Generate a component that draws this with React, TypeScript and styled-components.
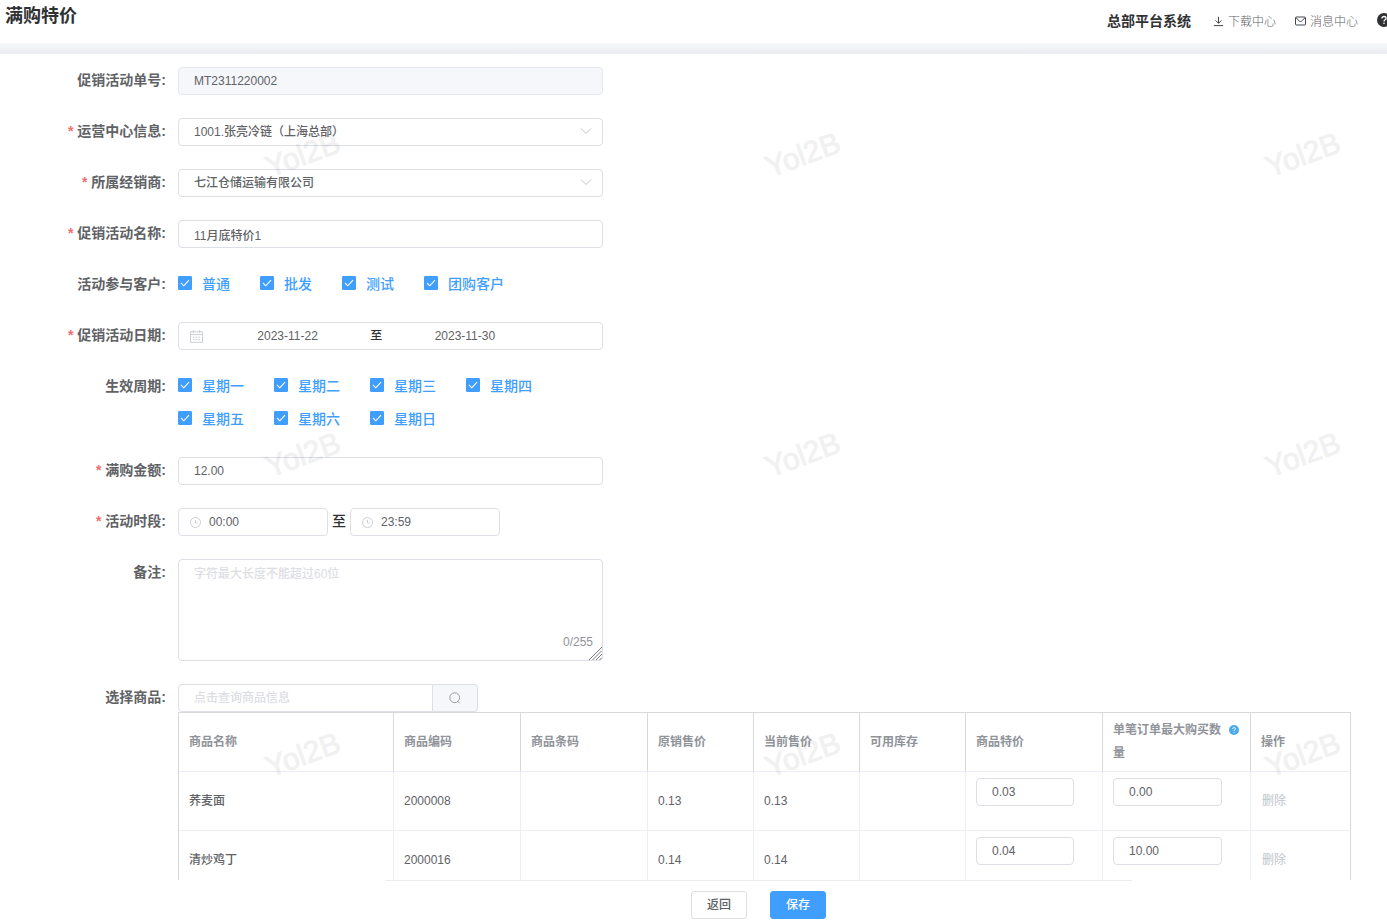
import React from "react";
import styled, { createGlobalStyle } from "styled-components";

const GlobalStyle = createGlobalStyle`
  *, *::before, *::after { box-sizing: border-box; }
  body {
    margin: 0;
    background: #fff;
    color: #606266;
    font: 500 12px/1.5 "Liberation Sans", "Noto Sans CJK SC", sans-serif;
  }
  input, select, textarea, button { font: inherit; color: inherit; margin: 0; }
`;

const Page = styled.div`
  position: relative;
  display: flex;
  flex-direction: column;
  height: 100vh;
  overflow: hidden;
`;

const Header = styled.header`
  display: flex;
  flex: none;
  align-items: flex-start;
  justify-content: space-between;
  height: 43px;
  padding-left: 5px;
`;

const Title = styled.h1`
  margin: 0;
  font-size: 18px;
  line-height: 32px;
  font-weight: 700;
  color: #303133;
`;

const HeaderNav = styled.nav`
  display: flex;
  align-items: center;
  height: 42px;
  margin-right: -4px;
`;

const SystemName = styled.strong`
  margin-right: 22px;
  font-size: 14px;
  font-weight: 700;
  color: #303133;
`;

const NavLink = styled.a`
  display: flex;
  align-items: center;
  gap: 4px;
  margin-right: 19px;
  padding-top: 1px;
  font-weight: 300;
  color: #606266;
  text-decoration: none;
`;

const HelpButton = styled.button`
  display: flex;
  padding: 0 0 2px;
  border: 0;
  background: none;
`;

const Divider = styled.div`
  flex: none;
  height: 11px;
  background: linear-gradient(#f7f8fa, #ebecef);
`;

const Content = styled.main`
  flex: 1;
  min-height: 0;
  overflow-y: auto;
  scrollbar-width: none;
  padding: 13px 36px 13px 0;
`;

const FormRow = styled.div`
  display: flex;
  align-items: flex-start;
  margin-bottom: 23px;
`;

const labelText = `
  flex: none;
  width: 178px;
  padding-right: 12px;
  font-size: 14px;
  line-height: 27px;
  font-weight: 700;
  text-align: right;
`;

const RowLabel = styled.label`
  ${labelText}
`;

const GroupLabel = styled.span`
  ${labelText}
`;

const Star = styled.span`
  margin-right: 4px;
  color: #f56c6c;
`;

const Field = styled.div`
  position: relative;
  flex: 0 1 425px;
  min-width: 0;
`;

const TextInput = styled.input<{ $icon?: boolean }>`
  display: block;
  width: 100%;
  height: 28px;
  padding: 0 15px 0 ${(p) => (p.$icon ? 30 : 15)}px;
  border: 1px solid #dcdfe6;
  border-radius: 4px;
  background: #fff;
  line-height: 26px;
  outline: 0;
  &:disabled {
    background: #f5f7fa;
    border-color: #e4e7ed;
  }
  &::placeholder { color: #dcdee3; opacity: 1; }
`;

const SelectBox = styled.select`
  display: block;
  width: 100%;
  height: 28px;
  padding: 0 30px 0 15px;
  border: 1px solid #dcdfe6;
  border-radius: 4px;
  background: #fff;
  appearance: none;
  outline: 0;
`;

const SelectArrow = styled.svg`
  position: absolute;
  top: 9px;
  right: 11px;
  pointer-events: none;
`;

const CheckList = styled.div`
  display: flex;
  flex-wrap: wrap;
  gap: 5px 30px;
`;

const CheckLabel = styled.label`
  display: flex;
  align-items: center;
  gap: 10px;
  height: 28px;
  padding-bottom: 2px;
  font-size: 14px;
  color: #409eff;
`;

const CheckMark = styled.span`
  position: relative;
  display: flex;
  width: 14px;
  height: 14px;
  margin-bottom: 2px;
  svg { position: absolute; inset: 0; pointer-events: none; }
`;

const CheckInput = styled.input`
  width: 14px;
  height: 14px;
  appearance: none;
  border: 1px solid #dcdfe6;
  border-radius: 1px;
  &:checked { background: #409eff; border-color: #409eff; }
`;

const DateRange = styled.div`
  display: flex;
  align-items: center;
  height: 28px;
  padding: 0 10px;
  border: 1px solid #dcdfe6;
  border-radius: 4px;
`;

const DateIcon = styled.span`
  display: flex;
  width: 20px;
  padding-left: 1px;
`;

const DateInput = styled.input`
  flex: 0 0 39%;
  min-width: 0;
  padding: 0;
  border: 0;
  outline: 0;
  text-align: center;
`;

const DateSeparator = styled.span`
  flex: 0 0 5%;
  text-align: center;
  color: #303133;
`;

const TimeRange = styled.div`
  display: flex;
  gap: 4px;
  font-size: 14px;
  line-height: 26px;
  color: #303133;
`;

const TimeField = styled.div`
  position: relative;
  width: 150px;
  font-size: 12px;
  color: #606266;
  svg { position: absolute; left: 12px; top: 9px; }
`;

const NoteInput = styled.textarea`
  display: block;
  width: 100%;
  height: 102px;
  padding: 5px 15px;
  border: 1px solid #dcdfe6;
  border-radius: 4px;
  resize: none;
  outline: 0;
  &::placeholder { color: #dcdee3; opacity: 1; }
`;

const Counter = styled.span`
  position: absolute;
  right: 10px;
  bottom: 10px;
  color: #909399;
`;

const Grip = styled.svg`
  position: absolute;
  right: 1px;
  bottom: 1px;
  pointer-events: none;
`;

const GoodsArea = styled.div`
  flex: 1;
  min-width: 0;
`;

const SearchGroup = styled.div`
  display: flex;
  width: 300px;
  ${TextInput} {
    flex: 1;
    min-width: 0;
    border-radius: 4px 0 0 4px;
  }
`;

const SearchButton = styled.button`
  display: flex;
  align-items: center;
  justify-content: center;
  width: 45px;
  height: 28px;
  padding: 0;
  border: 1px solid #dcdfe6;
  border-left: 0;
  border-radius: 0 4px 4px 0;
  background: #f5f7fa;
`;

const Table = styled.table`
  width: 100%;
  table-layout: fixed;
  border-collapse: separate;
  border-spacing: 0;
  border: solid #d6d8db;
  border-width: 1px 0 0 1px;
  line-height: 23px;
  text-align: left;
`;

const HeadCell = styled.th`
  height: 59px;
  padding: 5px 10px;
  border: solid;
  border-width: 0 1px 1px 0;
  border-color: #d6d8db #d6d8db #ebeef5;
  font-weight: 700;
  color: #909399;
`;

const BodyCell = styled.td`
  height: 59px;
  padding: 6px 10px;
  border: solid #ebeef5;
  border-width: 0 1px 1px 0;
  &:last-child { border-right-color: #d6d8db; }
`;

const CellInput = styled(TextInput)`
  width: calc(100% - 18px);
  margin-bottom: 18px;
`;

const Hint = styled.span`
  margin-left: 8px;
  svg { vertical-align: -1px; }
`;

const DeleteButton = styled.button`
  padding: 0 1px;
  border: 0;
  background: none;
  font-weight: 400;
  color: #c0c4cc;
`;

const Footer = styled.footer`
  position: relative;
  z-index: 2;
  display: flex;
  flex: none;
  justify-content: center;
  padding-left: 130px;
  background: #fff;
`;

const FooterBar = styled.div`
  display: flex;
  flex: 0 1 747px;
  justify-content: center;
  gap: 23px;
  padding: 10px 0 4px;
  border-top: 1px solid #ebeef0;
`;

const ActionButton = styled.button<{ $primary?: boolean }>`
  width: 56px;
  height: 28px;
  padding: 0;
  border: 1px solid ${(p) => (p.$primary ? "#409eff" : "#dcdfe6")};
  border-radius: 3px;
  background: ${(p) => (p.$primary ? "#409eff" : "#fff")};
  color: ${(p) => (p.$primary ? "#fff" : "#606266")};
`;

const WatermarkLayer = styled.div`
  position: absolute;
  inset: 0;
  z-index: 1;
  display: grid;
  grid-template-columns: repeat(3, 500px);
  grid-auto-rows: 300px;
  padding: 4px 0 0 53px;
  overflow: hidden;
  pointer-events: none;
`;

const Watermark = styled.span`
  place-self: center;
  font-size: 30px;
  font-weight: 400;
  color: #000;
  opacity: 0.05;
  -webkit-text-stroke: 1px #000;
  transform: rotate(-20deg);
`;

const customers = ["普通", "批发", "测试", "团购客户"];
const weekdays = ["星期一", "星期二", "星期三", "星期四", "星期五", "星期六", "星期日"];

const columns = [
  { title: "商品名称", width: 215 },
  { title: "商品编码", width: 127 },
  { title: "商品条码", width: 127 },
  { title: "原销售价", width: 106 },
  { title: "当前售价", width: 106 },
  { title: "可用库存", width: 106 },
  { title: "商品特价", width: 137 },
  { title: "单笔订单最大购买数量", width: 148 },
  { title: "操作", width: 100 },
];

const goods = [
  { name: "荞麦面", code: "2000008", original: "0.13", current: "0.13", special: "0.03", max: "0.00" },
  { name: "清炒鸡丁", code: "2000016", original: "0.14", current: "0.14", special: "0.04", max: "10.00" },
];

const Clock = () => (
  <svg width="11" height="11" viewBox="0 0 11 11" fill="none" stroke="#c0c4cc" aria-hidden="true">
    <circle cx="5.5" cy="5.5" r="5" strokeWidth=".8" />
    <path d="M5.5 3v3h2.3" strokeWidth=".8" />
  </svg>
);

const Calendar = () => (
  <svg width="13" height="13" viewBox="0 0 13 13" fill="none" stroke="#c0c4cc" aria-hidden="true">
    <path d="M.5 1.8h12v10.6H.5zM.5 4.6h12" strokeWidth=".8" />
    <path d="M3.4.3v2.5M9.6.3v2.5" strokeWidth=".9" />
    <path d="M3 7.2h1.6M5.7 7.2h1.6M8.4 7.2H10M3 9.7h1.6M5.7 9.7h1.6M8.4 9.7H10" strokeWidth=".9" />
  </svg>
);

const Question = ({ size, color }: { size: number; color: string }) => (
  <svg width={size} height={size} viewBox="0 0 14 14" fill="none" aria-hidden="true">
    <circle cx="7" cy="7" r="7" fill={color} />
    <path d="M4.9 5.6c0-1.3.9-2.1 2.1-2.1s2.1.8 2.1 1.9c0 1.4-2.1 1.5-2.1 3" stroke="#fff" strokeWidth="1.3" />
    <circle cx="7" cy="10.3" r=".8" fill="#fff" />
  </svg>
);

function Label({ id, required, children }: { id: string; required?: boolean; children: React.ReactNode }) {
  return (
    <RowLabel htmlFor={id}>
      {required && <Star>*</Star>}
      {children}:
    </RowLabel>
  );
}

function SelectField({ id, value }: { id: string; value: string }) {
  return (
    <Field>
      <SelectBox id={id} defaultValue={value}>
        <option>{value}</option>
      </SelectBox>
      <SelectArrow width="12" height="8" viewBox="0 0 12 8" fill="none" stroke="#c0c4cc">
        <path d="M1 1.5l5 5 5-5" />
      </SelectArrow>
    </Field>
  );
}

function Check({ text }: { text: string }) {
  return (
    <CheckLabel>
      <CheckMark>
        <CheckInput type="checkbox" defaultChecked />
        <svg width="14" height="14" viewBox="0 0 14 14" fill="none" stroke="#fff">
          <path d="M3 7l2.8 2.8L11 4.2" strokeWidth="1.1" />
        </svg>
      </CheckMark>
      {text}
    </CheckLabel>
  );
}

export default function App() {
  return (
    <Page>
      <GlobalStyle />
      <Header>
        <Title>满购特价</Title>
        <HeaderNav>
          <SystemName>总部平台系统</SystemName>
          <NavLink href="#download">
            <svg width="11" height="11" viewBox="0 0 11 11" fill="none" stroke="#303133">
              <path d="M5.5.8v6.4M2.6 4.4l2.9 2.9 2.9-2.9M.8 9.6h9.4" strokeWidth=".9" />
            </svg>
            下载中心
          </NavLink>
          <NavLink href="#messages">
            <svg width="11" height="11" viewBox="0 0 11 11" fill="none" stroke="#303133">
              <rect x=".5" y="1" width="10" height="8" rx="1" strokeWidth=".9" />
              <path d="M1 1.8l3.6 3.4q.9.7 1.8 0L10 1.8" strokeWidth=".9" />
            </svg>
            消息中心
          </NavLink>
          <HelpButton type="button" aria-label="帮助">
            <Question size={14} color="#303133" />
          </HelpButton>
        </HeaderNav>
      </Header>
      <Divider />
      <Content>
        <FormRow>
          <Label id="number">促销活动单号</Label>
          <Field>
            <TextInput id="number" disabled defaultValue="MT2311220002" />
          </Field>
        </FormRow>
        <FormRow>
          <Label id="center" required>运营中心信息</Label>
          <SelectField id="center" value="1001.张亮冷链（上海总部）" />
        </FormRow>
        <FormRow>
          <Label id="dealer" required>所属经销商</Label>
          <SelectField id="dealer" value="七江仓储运输有限公司" />
        </FormRow>
        <FormRow>
          <Label id="name" required>促销活动名称</Label>
          <Field>
            <TextInput id="name" defaultValue="11月底特价1" />
          </Field>
        </FormRow>
        <FormRow role="group" aria-labelledby="customers">
          <GroupLabel id="customers">活动参与客户:</GroupLabel>
          <Field>
            <CheckList>
              {customers.map((c) => <Check key={c} text={c} />)}
            </CheckList>
          </Field>
        </FormRow>
        <FormRow>
          <Label id="start" required>促销活动日期</Label>
          <Field>
            <DateRange>
              <DateIcon><Calendar /></DateIcon>
              <DateInput id="start" defaultValue="2023-11-22" />
              <DateSeparator>至</DateSeparator>
              <DateInput aria-label="结束日期" defaultValue="2023-11-30" />
            </DateRange>
          </Field>
        </FormRow>
        <FormRow role="group" aria-labelledby="period">
          <GroupLabel id="period">生效周期:</GroupLabel>
          <Field>
            <CheckList>
              {weekdays.map((d) => <Check key={d} text={d} />)}
            </CheckList>
          </Field>
        </FormRow>
        <FormRow>
          <Label id="amount" required>满购金额</Label>
          <Field>
            <TextInput id="amount" defaultValue="12.00" />
          </Field>
        </FormRow>
        <FormRow>
          <Label id="from" required>活动时段</Label>
          <TimeRange>
            <TimeField>
              <TextInput id="from" $icon defaultValue="00:00" />
              <Clock />
            </TimeField>
            至
            <TimeField>
              <TextInput aria-label="结束时间" $icon defaultValue="23:59" />
              <Clock />
            </TimeField>
          </TimeRange>
        </FormRow>
        <FormRow>
          <Label id="note">备注</Label>
          <Field>
            <NoteInput id="note" placeholder="字符最大长度不能超过60位" />
            <Counter>0/255</Counter>
            <Grip width="13" height="13" viewBox="0 0 13 13" stroke="#77797d">
              <path d="M0 13L13 0M3.5 13L13 3.5M7 13l6-6M10.5 13l2.5-2.5" />
            </Grip>
          </Field>
        </FormRow>
        <FormRow>
          <Label id="goods">选择商品</Label>
          <GoodsArea>
            <SearchGroup>
              <TextInput id="goods" placeholder="点击查询商品信息" />
              <SearchButton type="button" aria-label="查询">
                <svg width="12" height="12" viewBox="0 0 12 12" fill="none" stroke="#909399">
                  <circle cx="5.7" cy="5.7" r="4.9" strokeWidth=".9" />
                  <path d="M8.8 9.3l1.8 1.9" strokeWidth=".9" />
                </svg>
              </SearchButton>
            </SearchGroup>
            <Table>
              <colgroup>
                {columns.map((c) => <col key={c.title} width={c.width} />)}
              </colgroup>
              <thead>
                <tr>
                  {columns.map((c) => (
                    <HeadCell key={c.title} scope="col">
                      {c.title === "单笔订单最大购买数量" ? (
                        <>
                          单笔订单最大购买数
                          <Hint><Question size={10} color="#4aaaf2" /></Hint>
                          量
                        </>
                      ) : c.title}
                    </HeadCell>
                  ))}
                </tr>
              </thead>
              <tbody>
                {goods.map((g) => (
                  <tr key={g.code}>
                    <BodyCell>{g.name}</BodyCell>
                    <BodyCell>{g.code}</BodyCell>
                    <BodyCell />
                    <BodyCell>{g.original}</BodyCell>
                    <BodyCell>{g.current}</BodyCell>
                    <BodyCell />
                    <BodyCell><CellInput aria-label="商品特价" defaultValue={g.special} /></BodyCell>
                    <BodyCell><CellInput aria-label="最大购买数量" defaultValue={g.max} /></BodyCell>
                    <BodyCell><DeleteButton type="button">删除</DeleteButton></BodyCell>
                  </tr>
                ))}
              </tbody>
            </Table>
          </GoodsArea>
        </FormRow>
      </Content>
      <Footer>
        <FooterBar>
          <ActionButton type="button">返回</ActionButton>
          <ActionButton type="button" $primary>保存</ActionButton>
        </FooterBar>
      </Footer>
      <WatermarkLayer aria-hidden="true">
        {Array.from({ length: 9 }, (_, i) => <Watermark key={i}>Yol2B</Watermark>)}
      </WatermarkLayer>
    </Page>
  );
}
